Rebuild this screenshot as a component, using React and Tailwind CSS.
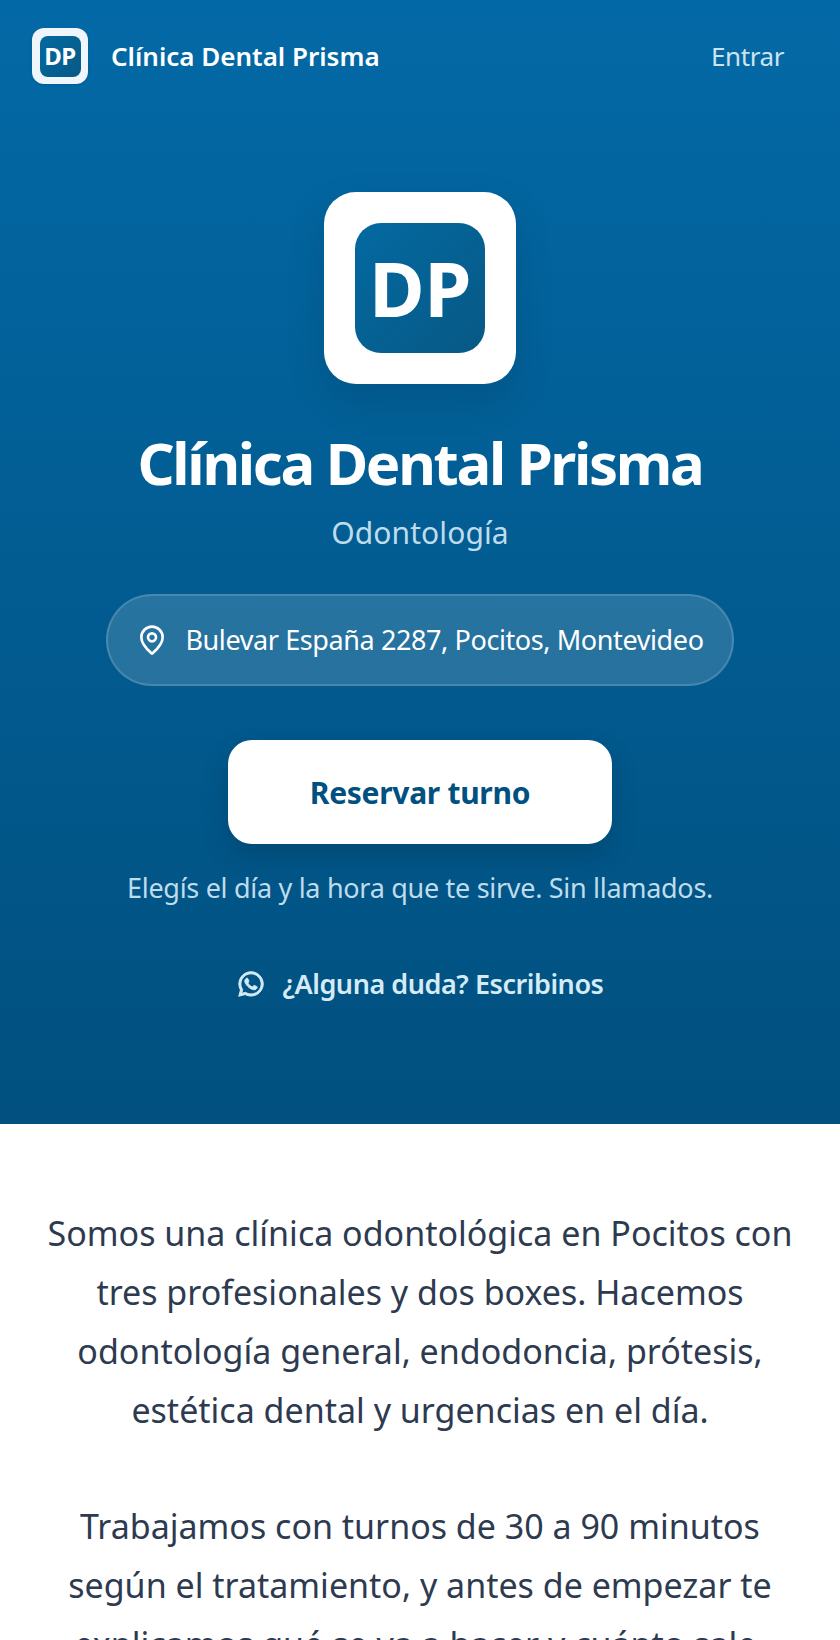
import React from "react";
import { MapPin } from "lucide-react";
import { FaWhatsapp } from "react-icons/fa";

const font = "font-['Noto_Sans','Open_Sans',sans-serif]";

function Logo({ outer, inner, text }) {
  return (
    <div className={`${outer} flex items-center justify-center shrink-0`}>
      <div className={`${inner} bg-gradient-to-br from-[#0369a1] to-[#075985] flex items-center justify-center text-white font-bold`}>
        <span className={text}>DP</span>
      </div>
    </div>
  );
}

export default function App() {
  return (
    <div className={`${font} h-[1640px] overflow-hidden bg-white`}>
      <section className="h-[1124px] bg-gradient-to-b from-[#0369a6] to-[#01507f]">
        <header className="flex items-center justify-between pt-[28px] pl-[32px] pr-[56px]">
          <div className="flex items-center gap-[23px]">
            <Logo
              outer="w-[56px] h-[56px] rounded-[12px] bg-[#eef6fb] shadow-sm"
              inner="w-[41px] h-[41px] rounded-[8px]"
              text="text-[24px] tracking-[-0.5px]"
            />
            <span className="text-white text-[26px] font-semibold">Clínica Dental Prisma</span>
          </div>
          <span className="text-[#cfe3ef] text-[26px] tracking-[-0.4px]">Entrar</span>
        </header>

        <div className="flex flex-col items-center pt-[108px]">
          <div className="shadow-[0_16px_40px_rgba(0,0,0,0.12)] rounded-[32px]">
            <Logo
              outer="w-[192px] h-[192px] rounded-[32px] bg-white"
              inner="w-[130px] h-[130px] rounded-[26px]"
              text="text-[76px] leading-none tracking-[-0.5px]"
            />
          </div>
          <h1 className="mt-[43px] text-white text-[58px] leading-[72px] font-bold tracking-[-2.3px]">Clínica Dental Prisma</h1>
          <p className="mt-[12px] text-[#bfdcec] text-[30px] leading-[44px] tracking-[0.1px]">Odontología</p>

          <div className="mt-[39px] w-[628px] h-[92px] rounded-full bg-white/15 border-2 border-white/15 flex items-center justify-center gap-[17px]">
            <MapPin className="w-[32px] h-[32px] text-white" strokeWidth={2} />
            <span className="text-white text-[27px] tracking-[-0.4px]">Bulevar España 2287, Pocitos, Montevideo</span>
          </div>

          <div className="mt-[54px] w-[384px] h-[104px] rounded-[24px] bg-white shadow-[0_12px_28px_rgba(0,0,0,0.15)] flex items-center justify-center">
            <span className="text-[#01507f] text-[30px] font-bold tracking-[-0.3px]">Reservar turno</span>
          </div>

          <p className="mt-[25px] text-[#bfdcec] text-[27px] leading-[38px] tracking-[-0.3px]">Elegís el día y la hora que te sirve. Sin llamados.</p>

          <div className="mt-[57px] flex items-center gap-[18px] text-[#d5ebf6]">
            <FaWhatsapp className="w-[28px] h-[28px]" strokeWidth={18} />
            <span className="text-[27px] leading-[40px] font-semibold tracking-[-0.45px]">¿Alguna duda? Escribinos</span>
          </div>
        </div>
      </section>

      <section className="pt-[80px] text-center text-[#2d3a50] text-[34px] leading-[59px]">
        <p>
          Somos una clínica odontológica en Pocitos con<br />
          tres profesionales y dos boxes. Hacemos<br />
          odontología general, endodoncia, prótesis,<br />
          estética dental y urgencias en el día.
        </p>
        <p className="mt-[57px]">
          Trabajamos con turnos de 30 a 90 minutos<br />
          según el tratamiento, y antes de empezar te<br />
          explicamos qué se va a hacer y cuánto sale.
        </p>
      </section>
    </div>
  );
}
